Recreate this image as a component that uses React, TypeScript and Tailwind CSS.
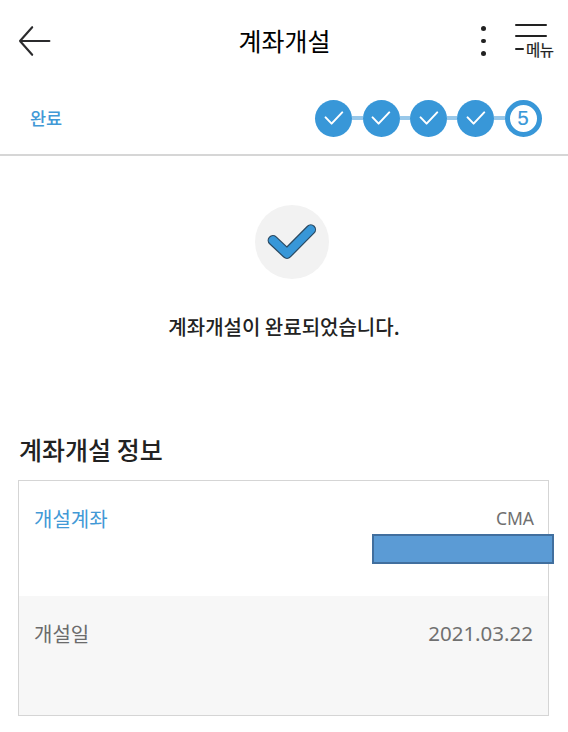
import React from "react";

const BackIcon = () => (
  <svg width="34" height="34" viewBox="0 0 34 34" fill="none" stroke="#2b2b2d" strokeWidth="2.1" strokeLinecap="round" strokeLinejoin="round">
    <path d="M15.2 3.2 3 17 15.2 30.8M3 17H32.4" />
  </svg>
);

const CheckStep = () => (
  <div className="flex h-[37px] w-[37px] shrink-0 items-center justify-center rounded-full bg-[#3897d8]">
    <svg width="20" height="14" viewBox="0 0 20 14" fill="none" stroke="#fff" strokeWidth="2" strokeLinecap="round" strokeLinejoin="round">
      <path d="M1.6 6.4 7.6 12.6 18.2 1.4" />
    </svg>
  </div>
);

const Link = () => <div className="h-1 w-[10.3px] shrink-0 bg-[#98c8ea]" />;

export default function App() {
  return (
    <div className="h-[732px] w-[568px] overflow-hidden bg-white font-['Noto_Sans_CJK_KR','Noto_Sans',sans-serif]">
      <header className="grid h-[82px] grid-cols-[1fr_auto_1fr] items-center pl-[17px] pr-[15px]">
        <BackIcon />
        <h1 className="-ml-px pb-[2px] text-[25px] font-normal leading-[30px] text-black">계좌개설</h1>
        <div className="flex items-center justify-end gap-[29px]">
          <div className="flex flex-col gap-[8px]">
            <span className="h-[4.6px] w-[4.6px] rounded-full bg-[#222]" />
            <span className="h-[4.6px] w-[4.6px] rounded-full bg-[#222]" />
            <span className="h-[4.6px] w-[4.6px] rounded-full bg-[#222]" />
          </div>
          <div className="flex h-[36px] w-[38px] flex-col">
            <span className="mt-px h-[2.4px] w-8 rounded-full bg-[#222]" />
            <span className="mt-[9.6px] h-[2.4px] w-8 rounded-full bg-[#222]" />
            <div className="mt-[2px] flex h-[20px] items-center gap-[2px]">
              <span className="h-[2.4px] w-[9px] shrink-0 rounded-full bg-[#222]" />
              <span className="whitespace-nowrap text-[15.5px] font-normal leading-5 tracking-[-0.5px] text-[#222] [-webkit-text-stroke:0.2px_#222]">메뉴</span>
            </div>
          </div>
        </div>
      </header>

      <section className="flex h-[74px] items-center justify-between border-b-2 border-[#d6d6d6] pl-[30px] pr-[26.4px]">
        <span className="text-[17.5px] font-medium leading-6 text-[#4299d6]">완료</span>
        <div className="flex items-center">
          <CheckStep />
          <Link />
          <CheckStep />
          <Link />
          <CheckStep />
          <Link />
          <CheckStep />
          <Link />
          <div className="flex h-[37px] w-[37px] items-center justify-center rounded-full border-[5px] border-[#3897d8] bg-white font-['Liberation_Sans',sans-serif] text-[20px] leading-none text-[#3897d8] [-webkit-text-stroke:0.2px_#3897d8]">
            5
          </div>
        </div>
      </section>

      <section className="flex flex-col items-center pt-[49px]">
        <div className="ml-[15px] flex h-[74px] w-[74px] items-center justify-center rounded-full bg-[#f2f2f2]">
          <svg width="52" height="40" viewBox="0 0 52 40" fill="none" strokeLinecap="round" strokeLinejoin="round">
            <path d="M6.9 18.3 21 31.6 44.8 7.6" stroke="#2b4961" strokeWidth="10.6" />
            <path d="M6.9 18.3 21 31.6 44.8 7.6" stroke="#3897d8" strokeWidth="8.2" />
          </svg>
        </div>
        <p className="mt-[33px] text-[20px] font-medium leading-[30px] text-[#222]">계좌개설이 완료되었습니다.</p>
      </section>

      <section className="px-[18px] pt-[89px]">
        <h2 className="pl-px text-[25px] font-medium leading-[36px] text-[#222]">계좌개설 정보</h2>
        <div className="mt-[13px] flex h-[236px] w-[531px] flex-col border border-[#d5d5d5]">
          <div className="flex h-[115px] justify-between pl-[15px] pr-[14px] pt-[23px]">
            <span className="text-[20px] leading-[30px] text-[#4299d6]">개설계좌</span>
            <div className="relative -mt-px">
              <span className="font-['Noto_Sans',sans-serif] text-[17.5px] leading-[30px] text-[#707070]">CMA</span>
              <div className="absolute -right-5 top-[31px] h-[30px] w-[182px] border-2 border-[#416f9e] bg-[#5b9bd5]" />
            </div>
          </div>
          <div className="flex flex-1 justify-between bg-[#f7f7f7] pl-[15px] pr-[15px] pt-[23px]">
            <span className="text-[20px] leading-[30px] text-[#6b6b6b]">개설일</span>
            <span className="font-['Noto_Sans',sans-serif] text-[20.5px] leading-[29px] text-[#707070]">2021.03.22</span>
          </div>
        </div>
      </section>
    </div>
  );
}
